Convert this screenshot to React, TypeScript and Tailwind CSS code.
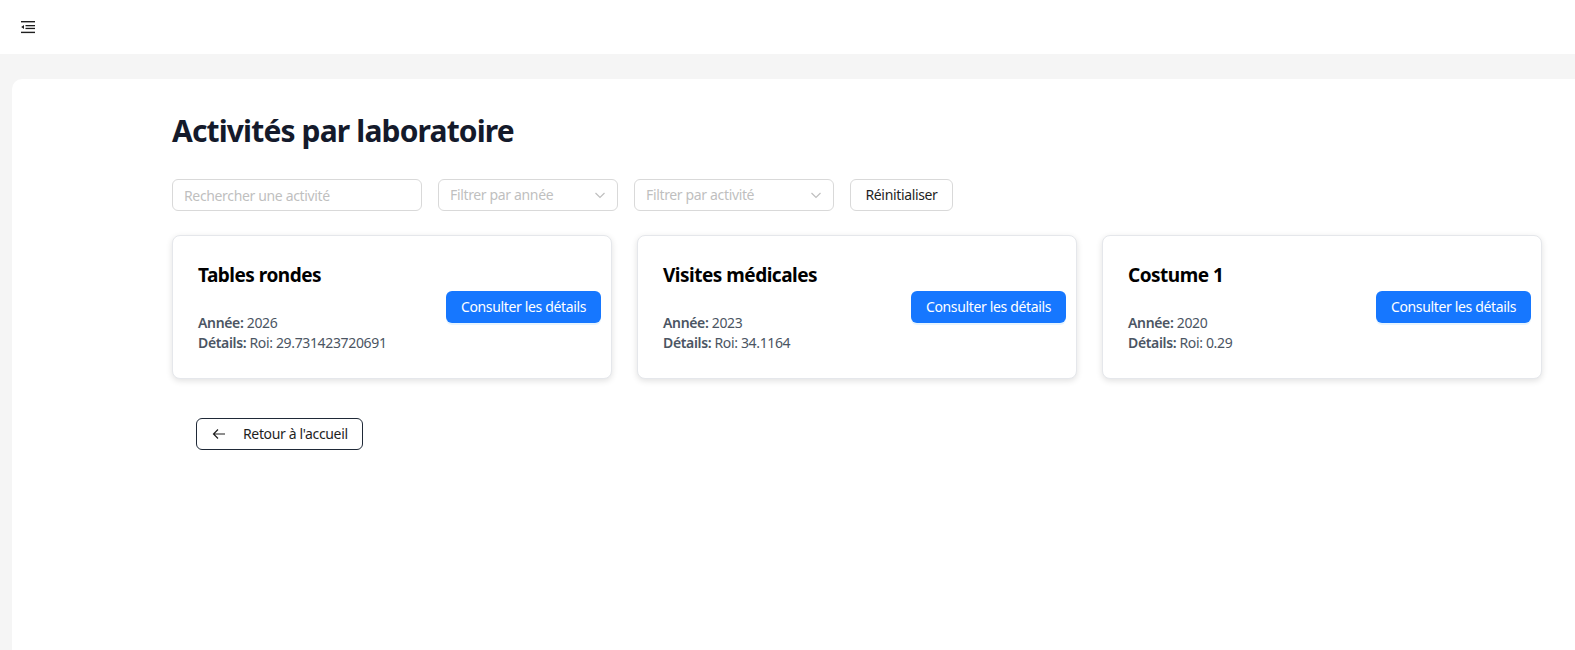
import React from 'react';

const activities = [
  { title: 'Tables rondes', year: '2026', details: 'Roi: 29.731423720691' },
  { title: 'Visites médicales', year: '2023', details: 'Roi: 34.1164' },
  { title: 'Costume 1', year: '2020', details: 'Roi: 0.29' },
];

const Chevron = () => (
  <svg width="12" height="12" viewBox="0 0 12 12" fill="none" stroke="#bfbfbf" strokeWidth="1.2">
    <path d="M1.5 4 L6 8.5 L10.5 4" />
  </svg>
);

const MenuFold = () => (
  <svg width="16" height="16" viewBox="0 0 16 16" fill="none">
    <rect x="1" y="2" width="14" height="1.4" fill="#1f1f1f" />
    <rect x="5.5" y="6" width="9.5" height="1.3" fill="#1f1f1f" />
    <rect x="5.5" y="8.8" width="9.5" height="1.3" fill="#1f1f1f" />
    <rect x="1" y="12.7" width="14" height="1.4" fill="#1f1f1f" />
    <path d="M1.2 8 L4 5.9 L4 10.1 Z" fill="#1f1f1f" />
  </svg>
);

const Select = ({ placeholder, width }: { placeholder: string; width: string }) => (
  <div className={`${width} h-8 rounded-md border border-[#d9d9d9] bg-white flex items-center justify-between pl-[11px] pr-[11px]`}>
    <span className="text-sm text-[#bfbfbf]">{placeholder}</span>
    <Chevron />
  </div>
);

export default function App() {
  return (
    <div className="min-h-[650px] bg-[#f5f5f5] font-['Noto_Sans',sans-serif] tracking-[-0.35px]">
      <header className="h-[54px] bg-white flex items-center pl-5">
        <MenuFold />
      </header>
      <div className="pt-[25px] pl-3">
        <main className="bg-white rounded-tl-[10px] min-h-[571px] pl-[160px] pr-[33px] pt-[32px]">
          <h2 className="text-[30px] leading-[40px] font-bold text-[#141a2b] tracking-[-0.85px]">
            Activités par laboratoire
          </h2>

          <div className="flex items-center gap-4 mt-[28px]">
            <input
              placeholder="Rechercher une activité"
              className="w-[250px] h-8 rounded-md border border-[#d9d9d9] px-[11px] text-sm placeholder:text-[#bfbfbf] outline-none"
            />
            <Select placeholder="Filtrer par année" width="w-[180px]" />
            <Select placeholder="Filtrer par activité" width="w-[200px]" />
            <button className="h-8 w-[103px] rounded-md border border-[#d9d9d9] bg-white text-sm text-[#1f1f1f]">
              Réinitialiser
            </button>
          </div>

          <div className="grid grid-cols-3 gap-[25px] mt-6">
            {activities.map((a) => (
              <div
                key={a.title}
                className="h-[144px] rounded-lg border border-[#e5e7eb] bg-white shadow-[0_2px_6px_rgba(0,0,0,0.12)] flex items-center justify-between pl-[25px] pr-[10px]"
              >
                <div>
                  <h4 className="text-[19px] leading-7 font-bold text-black tracking-[-0.5px]">{a.title}</h4>
                  <div className="mt-6 text-sm leading-5 text-[#4b5563]">
                    <p>
                      <span className="font-semibold">Année:</span> {a.year}
                    </p>
                    <p>
                      <span className="font-semibold">Détails:</span> {a.details}
                    </p>
                  </div>
                </div>
                <button className="h-8 w-[155px] rounded-md bg-[#1677ff] text-white text-sm shadow-[0_2px_0_rgba(5,145,255,0.1)]">
                  Consulter les détails
                </button>
              </div>
            ))}
          </div>

          <button className="mt-[39px] ml-6 h-8 w-[167px] rounded-md border border-[#1f2937] bg-white flex items-center pl-[15px] text-sm text-[#1f1f1f]">
            <svg width="14" height="14" viewBox="0 0 14 14" fill="none" stroke="#1f1f1f" strokeWidth="1.2">
              <path d="M13 7 H1.5 M6 2.5 L1.5 7 L6 11.5" />
            </svg>
            <span className="ml-[17px]">Retour à l'accueil</span>
          </button>
        </main>
      </div>
    </div>
  );
}
